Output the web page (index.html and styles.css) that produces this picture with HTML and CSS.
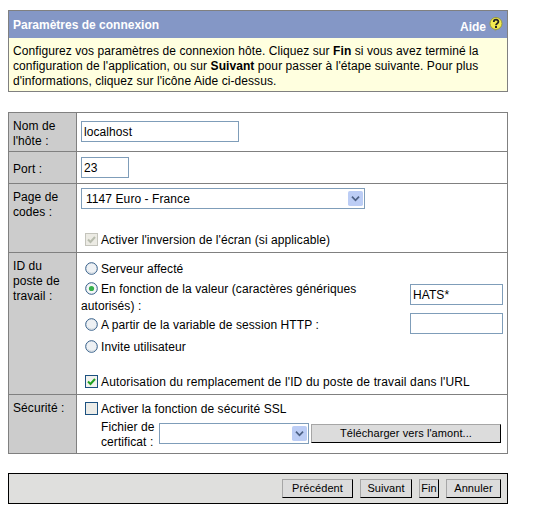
FILE: index.html
```html
<!DOCTYPE html>
<html lang="fr">
<head>
    <meta charset="UTF-8">
    <meta name="viewport" content="width=device-width, initial-scale=1.0">
    <title>Paramètres de connexion</title>
    <link rel="stylesheet" href="styles.css">
</head>
<body>
    <svg class="defs" width="0" height="0">
        <symbol id="radio" viewBox="0 0 13 13">
            <circle cx="6.5" cy="6.5" r="5.8" fill="#eef1f4" stroke="#2f5a85"/>
            <path d="M3 9.5a5 5 0 0 0 7 0.5" fill="none" stroke="#c9d2da"/>
        </symbol>
        <symbol id="radio-on" viewBox="0 0 13 13">
            <circle cx="6.5" cy="6.5" r="5.8" fill="#f4f6f8" stroke="#2f5a85"/>
            <circle cx="6.5" cy="6.5" r="2.6" fill="#35b04a"/>
        </symbol>
        <symbol id="arrow" viewBox="0 0 17 17">
            <rect x="0" y="0" width="17" height="17" rx="2" fill="#bccdf5"/>
            <path d="M4.5 6.5l4 4 4-4" fill="none" stroke="#4d6185" stroke-width="2"/>
        </symbol>
    </svg>

    <div class="panel">
        <div class="panel-title">
            <span>Paramètres de connexion</span>
            <span class="help">Aide
                <svg class="help-icon" viewBox="0 0 14 15" width="14" height="15">
                    <circle cx="7" cy="6.5" r="6" fill="#f2ea4e" stroke="#9a9a3a"/>
                    <path d="M4.8 5c0-3 4.6-3 4.6-0.2 0 1.700-2.400 1.700-2.400 3.400" fill="none" stroke="#222" stroke-width="1.800"/>
                    <rect x="6" y="9" width="2" height="2" fill="#222"/>
                    <path d="M5 12.500l1 2 2-1.500" fill="#8e9a8e"/>
                </svg>
            </span>
        </div>
        <p class="panel-text">Configurez vos paramètres de connexion hôte. Cliquez sur <b>Fin</b> si vous avez terminé la configuration de l'application, ou sur <b>Suivant</b> pour passer à l'étape suivante. Pour plus d'informations, cliquez sur l'icône Aide ci-dessus.</p>
    </div>

    <table class="settings">
        <tr class="row-host">
            <th>Nom de l'hôte :</th>
            <td><input class="field field-host" type="text" value="localhost"></td>
        </tr>
        <tr class="row-port">
            <th class="port-label">Port :</th>
            <td><input class="field field-port" type="text" value="23"></td>
        </tr>
        <tr class="row-codes">
            <th>Page de codes :</th>
            <td>
                <div class="combo combo-codes">
                    <select><option>1147 Euro - France</option></select>
                    <svg class="combo-arrow"><use href="#arrow"/></svg>
                </div>
                <div class="opt opt-invert">
                    <svg class="box" viewBox="0 0 13 13">
                        <rect x="0.500" y="0.500" width="12" height="12" fill="#ecebe4" stroke="#c4c4bc"/>
                        <path d="M3 6.500l2.500 2.500 4.500-5" fill="none" stroke="#b8bcae" stroke-width="2"/>
                    </svg>
                    Activer l'inversion de l'écran (si applicable)
                </div>
            </td>
        </tr>
        <tr class="row-id">
            <th>ID du poste de travail :</th>
            <td>
                <div class="opt opt-server"><svg class="box"><use href="#radio"/></svg>Serveur affecté</div>
                <div class="id-value">
                    <div class="value-label"><svg class="box"><use href="#radio-on"/></svg>En fonction de la valeur (caractères génériques autorisés) :</div>
                    <input class="field field-id field-value" type="text" value="HATS*">
                </div>
                <div class="id-session">
                    <div class="opt"><svg class="box"><use href="#radio"/></svg>A partir de la variable de session HTTP :</div>
                    <input class="field field-id" type="text">
                </div>
                <div class="opt opt-prompt"><svg class="box"><use href="#radio"/></svg>Invite utilisateur</div>
                <div class="opt opt-url">
                    <svg class="box" viewBox="0 0 13 13">
                        <rect x="0.500" y="0.500" width="12" height="12" fill="#f2f2ee" stroke="#1c5180"/>
                        <path d="M3 6.500l2.500 2.500 4.500-5" fill="none" stroke="#21a121" stroke-width="2"/>
                    </svg>
                    Autorisation du remplacement de l'ID du poste de travail dans l'URL
                </div>
            </td>
        </tr>
        <tr class="row-security">
            <th>Sécurité :</th>
            <td>
                <div class="opt opt-ssl">
                    <svg class="box" viewBox="0 0 13 13">
                        <rect x="0.500" y="0.500" width="12" height="12" fill="#ecece8" stroke="#1c5180"/>
                    </svg>
                    Activer la fonction de sécurité SSL
                </div>
                <div class="cert">
                    <span class="cert-label">Fichier de certificat :</span>
                    <div class="combo combo-cert">
                        <select></select>
                        <svg class="combo-arrow"><use href="#arrow"/></svg>
                    </div>
                    <button class="btn btn-upload" type="button">Télécharger vers l'amont...</button>
                </div>
            </td>
        </tr>
    </table>

    <div class="footer">
        <button class="btn btn-prev" type="button">Précédent</button>
        <button class="btn btn-next" type="button">Suivant</button>
        <button class="btn btn-end" type="button">Fin</button>
        <button class="btn btn-cancel" type="button">Annuler</button>
    </div>
</body>
</html>
```

FILE: styles.css
```css
body {
    font-family: "Liberation Sans", Arial, sans-serif;
    font-size: 12px;
    letter-spacing: 0.08px;
    color: #000;
    background: #fff;
    margin: 10px 27px 0 8px;
}

.defs {
    display: block;
    height: 0;
}

.panel {
    border: 1px solid #808080;
}

.panel-title {
    display: flex;
    justify-content: space-between;
    align-items: center;
    height: 27px;
    padding: 0 4px;
    background: #8497c6;
    color: #fff;
    font-weight: bold;
    letter-spacing: 0;
}

.help {
    display: flex;
    align-items: flex-start;
    gap: 3px;
    padding-top: 4px;
}

.help-icon {
    margin-top: -3px;
}

.panel-text {
    margin: 0;
    padding: 6px 4px 1px 4px;
    height: 46px;
    line-height: 15px;
    background: #ffffdf;
}

.settings {
    width: 500px;
    margin-top: 20px;
    border-collapse: collapse;
    table-layout: fixed;
}

.settings th,
.settings td {
    border: 1px solid #808080;
    vertical-align: top;
    padding: 0;
}

.settings th {
    width: 59px;
    padding: 6px 4px 0 4px;
    background: #cccccc;
    font-weight: normal;
    text-align: left;
    line-height: 15px;
}

.settings th.port-label {
    padding-top: 10px;
}

.settings td {
    padding: 0 4px;
}

.row-host { height: 39px; }
.row-port { height: 32px; }
.row-codes { height: 69px; }
.row-id { height: 142px; }
.row-security { height: 59px; }

.field {
    display: block;
    box-sizing: border-box;
    height: 21px;
    margin: 0;
    padding: 0 2px;
    border: 1px solid #7f9db9;
    border-radius: 0;
    outline: none;
    font: 12px "Liberation Sans", Arial, sans-serif;
    letter-spacing: 0.08px;
    background: #fff;
}

.field-host {
    width: 158px;
    margin-top: 8px;
}

.field-port {
    width: 48px;
    margin-top: 5px;
}

.field-id {
    width: 93px;
    flex: none;
}

.field-value {
    margin-top: 3px;
}

.combo {
    display: flex;
    align-items: center;
    box-sizing: border-box;
    height: 21px;
    border: 1px solid #7f9db9;
    padding-right: 1px;
    background: #fff;
}

.combo select {
    flex: 1;
    min-width: 0;
    height: 19px;
    padding: 0 0 0 4px;
    border: none;
    outline: none;
    background: #fff;
    appearance: none;
    font: 12px "Liberation Sans", Arial, sans-serif;
    letter-spacing: 0.08px;
    color: #000;
}

.combo-arrow {
    width: 15px;
    height: 17px;
    flex: none;
}

.combo-codes {
    width: 284px;
    margin-top: 4px;
}

.combo-cert {
    width: 150px;
    flex: none;
    margin-top: 3px;
}

.opt {
    display: flex;
    align-items: center;
    gap: 3px;
    height: 15px;
    white-space: nowrap;
}

.box {
    width: 13px;
    height: 13px;
    flex: none;
}

.opt-invert {
    margin: 23px 0 0 4px;
}

.opt-server {
    margin: 8px 0 0 4px;
}

.id-value {
    display: flex;
    justify-content: space-between;
    align-items: flex-start;
    margin-top: 5px;
}

.value-label {
    width: 290px;
    line-height: 17px;
}

.value-label .box {
    margin: 0 3px 0 4px;
    vertical-align: -2px;
}

.id-session {
    display: flex;
    justify-content: space-between;
    align-items: flex-start;
    margin-top: -2px;
}

.id-session .opt {
    margin: 4px 0 0 4px;
}

.opt-prompt {
    margin: 5px 0 0 4px;
}

.opt-url {
    margin: 20px 0 0 4px;
    letter-spacing: 0.14px;
}

.opt-ssl {
    margin: 6px 0 0 4px;
}

.cert {
    display: flex;
    align-items: flex-start;
    margin-top: 4px;
    padding-left: 20px;
}

.cert-label {
    width: 58px;
    flex: none;
    line-height: 15px;
}

.btn {
    box-sizing: border-box;
    height: 19px;
    padding: 0 0 2px;
    border: 1px solid;
    border-color: #a6a6a6 #000 #000 #a6a6a6;
    border-radius: 0;
    background: #dcdcdc;
    font: 11px "Liberation Sans", Arial, sans-serif;
    letter-spacing: 0.08px;
    color: #000;
}

.btn-upload {
    width: 190px;
    margin: 4px 0 0 2px;
}

.footer {
    display: flex;
    justify-content: flex-end;
    align-items: flex-start;
    gap: 7px;
    box-sizing: border-box;
    width: 500px;
    height: 31px;
    margin-top: 19px;
    padding: 5px 6px 0 0;
    border: 1px solid #000;
    background: #dfdfdd;
}

.btn-prev { width: 71px; }
.btn-next { width: 52px; }
.btn-end { width: 20px; }
.btn-cancel { width: 55px; }
```
